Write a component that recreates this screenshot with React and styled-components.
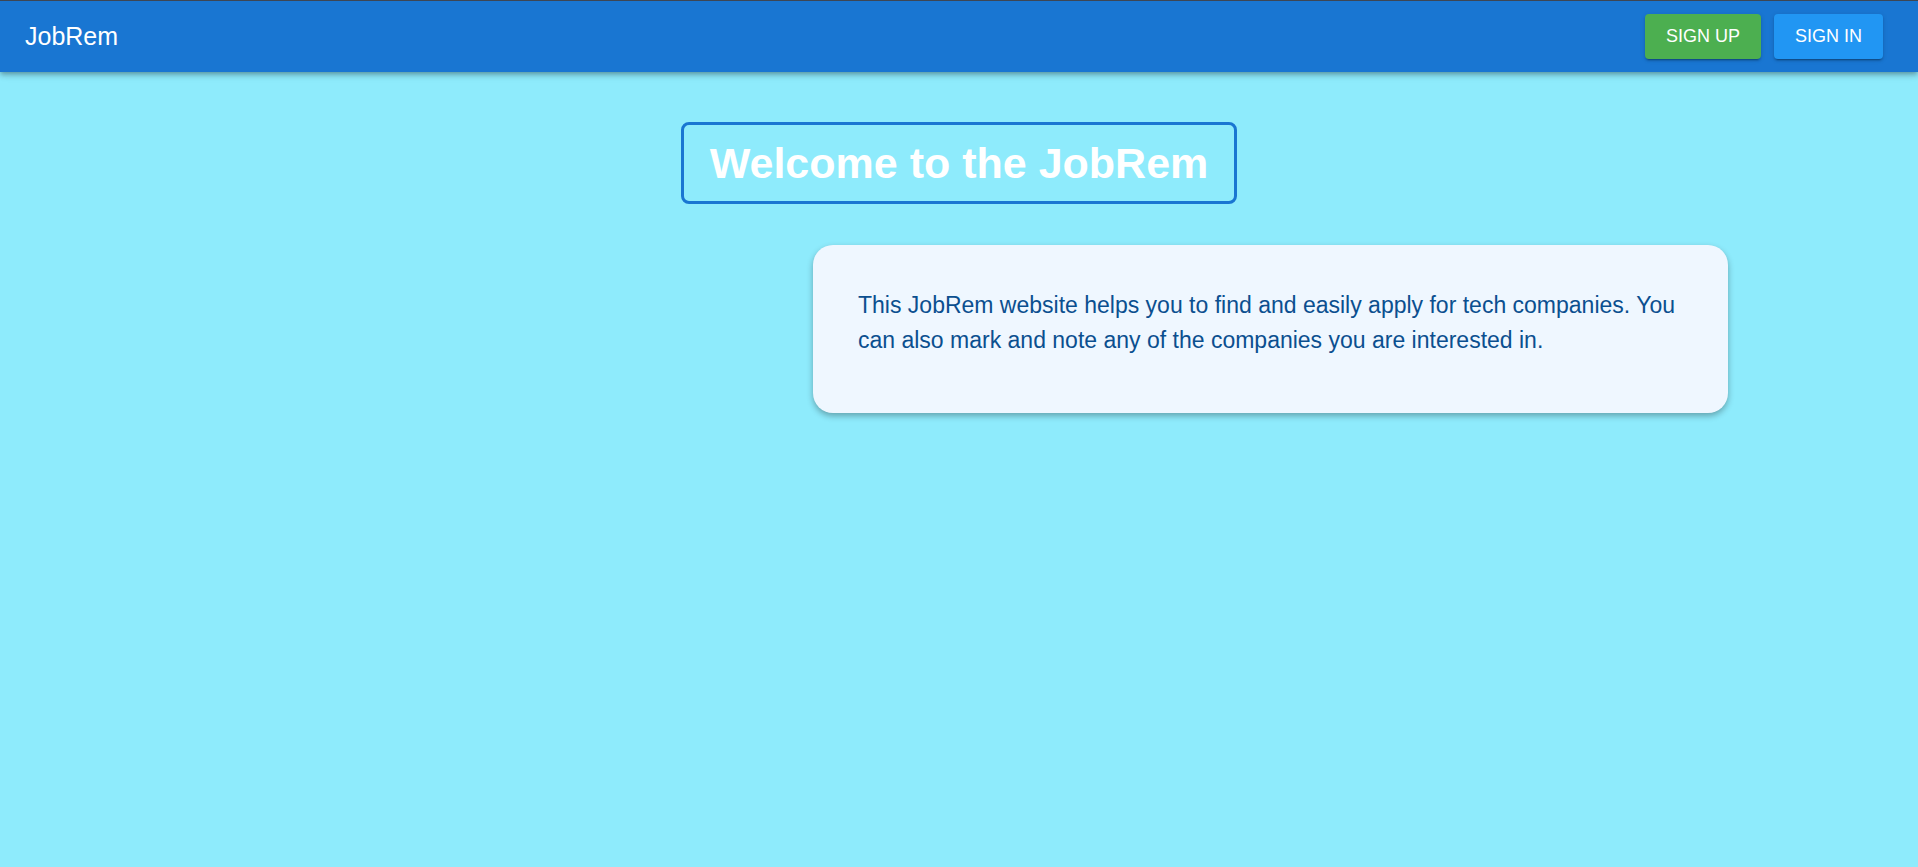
import React from 'react';
import styled, { createGlobalStyle } from 'styled-components';

const GlobalStyle = createGlobalStyle`
  html, body {
    margin: 0;
    padding: 0;
  }

  body {
    min-height: 100vh;
    background: #8eebfc;
    font-family: 'Liberation Sans', Arial, sans-serif;
  }
`;

const App = () => {
  return (
    <>
      <GlobalStyle />
      <Page>
        <AppBar>
          <Brand>JobRem</Brand>
          <Actions>
            <NavButton $bg="#4caf50">Sign Up</NavButton>
            <NavButton $bg="#2196f3">Sign In</NavButton>
          </Actions>
        </AppBar>
        <Main>
          <WelcomeTitle>Welcome to the JobRem</WelcomeTitle>
          <InfoRow>
            <InfoCard>
              <InfoText>
                This JobRem website helps you to find and easily apply for tech
                companies. You can also mark and note any of the companies you are
                interested in.
              </InfoText>
            </InfoCard>
          </InfoRow>
        </Main>
      </Page>
    </>
  );
};

export default App;

const Page = styled.div`
  min-height: 100vh;
  background: #8eebfc;
`;

const AppBar = styled.header`
  display: flex;
  align-items: center;
  justify-content: space-between;
  box-sizing: border-box;
  height: 72px;
  padding: 0 35px 0 25px;
  background: #1976d2;
  border-top: 1px solid #3d4654;
  box-shadow: 0 2px 4px -1px rgba(0, 0, 0, 0.2), 0 4px 5px 0 rgba(0, 0, 0, 0.14),
    0 1px 10px 0 rgba(0, 0, 0, 0.12);
  position: relative;
  z-index: 1;
`;

const Brand = styled.span`
  color: #ffffff;
  font-size: 25px;
  line-height: 1;
`;

const Actions = styled.div`
  display: flex;
  gap: 13px;
`;

const NavButton = styled.button`
  box-sizing: border-box;
  height: 45px;
  padding: 0 21px;
  border: none;
  border-radius: 4px;
  background: ${({ $bg }) => $bg};
  color: #ffffff;
  font-family: 'Liberation Sans', Arial, sans-serif;
  font-size: 18px;
  text-transform: uppercase;
  box-shadow: 0 3px 1px -2px rgba(0, 0, 0, 0.2), 0 2px 2px 0 rgba(0, 0, 0, 0.14),
    0 1px 5px 0 rgba(0, 0, 0, 0.12);
  cursor: pointer;
`;

const Main = styled.main`
  display: flex;
  flex-direction: column;
  align-items: center;
  padding-top: 50px;
`;

const WelcomeTitle = styled.h1`
  box-sizing: border-box;
  height: 82px;
  margin: 0;
  padding: 0 26px;
  display: flex;
  align-items: center;
  border: 3px solid #1976d2;
  border-radius: 8px;
  color: #ffffff;
  font-size: 43px;
  font-weight: 700;
`;

const InfoRow = styled.section`
  display: flex;
  justify-content: flex-end;
  align-self: stretch;
  margin-top: 41px;
  padding-right: 190px;
`;

const InfoCard = styled.div`
  box-sizing: border-box;
  width: 915px;
  padding: 43px 45px 55px;
  background: #eff7ff;
  border-radius: 20px;
  box-shadow: 0 3px 6px rgba(0, 0, 0, 0.3);
`;

const InfoText = styled.p`
  margin: 0;
  color: #0b4f8f;
  font-size: 23px;
  line-height: 35px;
`;
